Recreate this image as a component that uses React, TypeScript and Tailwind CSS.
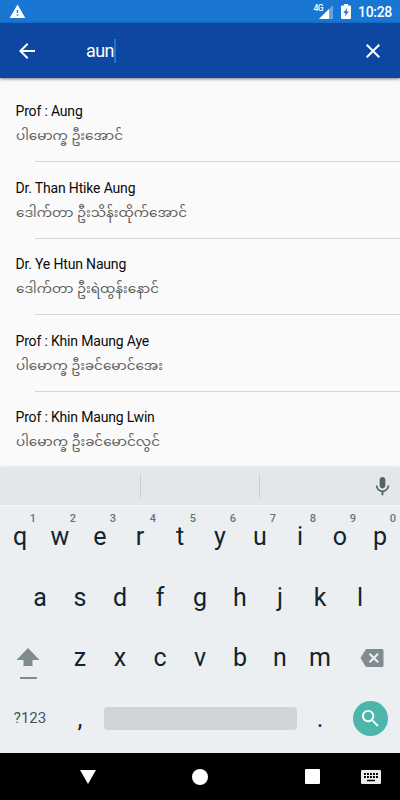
import { MdArrowBack, MdClose, MdMic, MdSearch, MdWarning } from "react-icons/md";

const professors = [
  { name: "Prof : Aung", local: "ပါမောက္ခ ဦးအောင်", width: 107 },
  { name: "Dr. Than Htike Aung", local: "ဒေါက်တာ ဦးသိန်းထိုက်အောင်", width: 171 },
  { name: "Dr. Ye Htun Naung", local: "ဒေါက်တာ ဦးရဲထွန်းနောင်", width: 143 },
  { name: "Prof : Khin Maung Aye", local: "ပါမောက္ခ ဦးခင်မောင်အေး", width: 147 },
  { name: "Prof : Khin Maung Lwin", local: "ပါမောက္ခ ဦးခင်မောင်လွင်", width: 144 },
];

const StatusBar = () => (
  <div className="flex h-[23px] shrink-0 items-center justify-between bg-[#1976d2] pl-[9px] pr-2 text-white">
    <MdWarning className="size-[17px]" />
    <div className="flex items-center">
      <span className="-mr-[4px] mb-[7px] font-['Roboto'] text-[8.5px] font-medium leading-none tracking-[-0.6px]">4G</span>
      <svg width="14" height="14" viewBox="0 0 14 14" className="mt-px">
        <path d="M14 0v14H0z" fill="#fff" fillOpacity="0.35" />
        <path d="M10 4v10H0z" fill="#fff" />
      </svg>
      <svg width="10" height="15" viewBox="0 0 10 15" className="ml-2">
        <path d="M3 0h4v1.5h2q1 0 1 1V14q0 1-1 1H1q-1 0-1-1V2.500q0-1 1-1h2z" fill="#fff" />
        <path d="M6.300 3.700L2.200 9h2.400l-.8 3.600L8 7.400H5.500z" fill="#1976d2" />
      </svg>
      <span className="ml-[7px] font-['Roboto'] text-[14px] font-medium leading-none tracking-[-0.3px]">10:28</span>
    </div>
  </div>
);

const SearchBar = () => (
  <div className="z-10 flex h-[55px] shrink-0 items-center bg-[#0d47a1] pl-[15px] pr-[15px] text-white shadow-[0_1px_3px_rgba(0,0,0,0.5)]">
    <MdArrowBack className="size-6" />
    <div className="ml-[47px] flex flex-1 items-center">
      <span className="font-['Roboto'] text-[18px] leading-6 tracking-[-0.6px]">aun</span>
      <span className="h-6 w-[2px] bg-[#1976d2]" />
    </div>
    <MdClose className="size-6" />
  </div>
);

const ProfessorList = () => (
  <div className="h-[389px] shrink-0 overflow-hidden bg-[#fafafa] pt-[7px]">
    {professors.map((p, i) => (
      <div key={p.name} className="h-[76.6px]">
        <div className="flex h-[76px] flex-col pl-[15.5px] pt-[16px]">
          <p className="font-['Roboto'] text-[14px] leading-5 tracking-[-0.17px] text-[#0a0a0a]">{p.name}</p>
          <svg width="220" height="32" className="shrink-0 overflow-visible">
            <text
              x="0"
              y="19"
              fontSize="13"
              textLength={p.width}
              lengthAdjust="spacingAndGlyphs"
              className="fill-[#606060] font-['Noto_Sans_Myanmar','Noto_Sans',sans-serif]"
            >
              {p.local}
            </text>
          </svg>
        </div>
        {i < professors.length - 1 && <div className="ml-[35px] h-px bg-[#d4d4d4]" />}
      </div>
    ))}
  </div>
);

const Key = ({ label, hint }: { label: string; hint?: string }) => (
  <div className="relative flex h-full w-10 items-center justify-center font-['Roboto'] text-[25px] text-[#10252d]">
    {label}
    {hint && (
      <span className="absolute left-[29px] top-[7px] w-2 text-center text-[11px] leading-3 font-medium text-[#66757b]">
        {hint}
      </span>
    )}
  </div>
);

const Keyboard = () => (
  <div className="flex h-[286px] shrink-0 flex-col bg-[#ebeff2]">
    <div className="z-10 flex h-[38px] items-center bg-[#e3e7e9] shadow-[0_-1px_2px_rgba(0,0,0,0.07)]">
      <div className="h-[24px] w-[141px] border-r border-[#c9cfd1]" />
      <div className="h-[24px] w-[119px] border-r border-[#c9cfd1]" />
      <MdMic className="ml-auto mr-[6px] size-[23px] text-[#536369]" />
    </div>
    <div className="flex h-[62px] border-t border-[#f2f4f6]">
      {"qwertyuiop".split("").map((k, i) => (
        <Key key={k} label={k} hint={String((i + 1) % 10)} />
      ))}
    </div>
    <div className="flex h-[61px] justify-center">
      {"asdfghjkl".split("").map((k) => (
        <Key key={k} label={k} />
      ))}
    </div>
    <div className="flex h-[60px] items-center">
      <div className="flex w-[60px] justify-center pr-[4px]">
        <svg width="24" height="32" viewBox="0 0 24 32" fill="#7f8b8f" className="mt-3">
          <path d="M12 0l11.500 12H16.500v6h-9v-6H.5z" />
          <path d="M4 29h17v2H4z" />
        </svg>
      </div>
      {"zxcvbnm".split("").map((k) => (
        <Key key={k} label={k} />
      ))}
      <svg width="24" height="18" viewBox="0 0 24 18" className="ml-5">
        <path d="M7 0h15q1.500 0 1.500 1.500v15Q23.500 18 22 18H7q-1 0-1.500-.8L.5 9l5-8.200Q6 0 7 0z" fill="#7f8b8f" />
        <path d="M9.500 4.700l8.600 8.600M18.100 4.700l-8.600 8.600" stroke="#ebeff2" strokeWidth="2.200" />
      </svg>
    </div>
    <div className="flex h-[61px] items-center">
      <div className="w-[60px] text-center font-['Roboto'] text-[15px] text-[#42545b]">?123</div>
      <Key label="," />
      <div className="ml-[3.500px] mr-[3.500px] h-[23px] w-[193px] rounded bg-[#d0d4d6]" />
      <Key label="." />
      <div className="ml-[13px] flex size-[35px] items-center justify-center rounded-full bg-[#4db6ac]">
        <MdSearch className="size-[23px] text-white" />
      </div>
    </div>
  </div>
);

const NavBar = () => (
  <div className="flex h-[47px] items-center bg-black text-white">
    <svg width="16" height="14" viewBox="0 0 16 14" className="ml-20" fill="currentColor">
      <path d="M0 0h16L8 14z" />
    </svg>
    <div className="ml-24 size-4 rounded-full bg-white" />
    <div className="ml-[97px] size-[15px] rounded-[1px] bg-white" />
    <svg width="20" height="14" viewBox="0 0 20 14" className="ml-[41px]">
      <rect width="20" height="14" rx="1" fill="#ececec" />
      <path d="M3 4h14M3 7h14" stroke="#000" strokeWidth="1.800" strokeDasharray="1.900 1.100" />
      <path d="M6 10.500h8" stroke="#000" strokeWidth="1.500" />
    </svg>
  </div>
);

export default function App() {
  return (
    <div className="flex h-[800px] w-[400px] flex-col overflow-hidden bg-[#fafafa]">
      <StatusBar />
      <SearchBar />
      <ProfessorList />
      <Keyboard />
      <NavBar />
    </div>
  );
}
